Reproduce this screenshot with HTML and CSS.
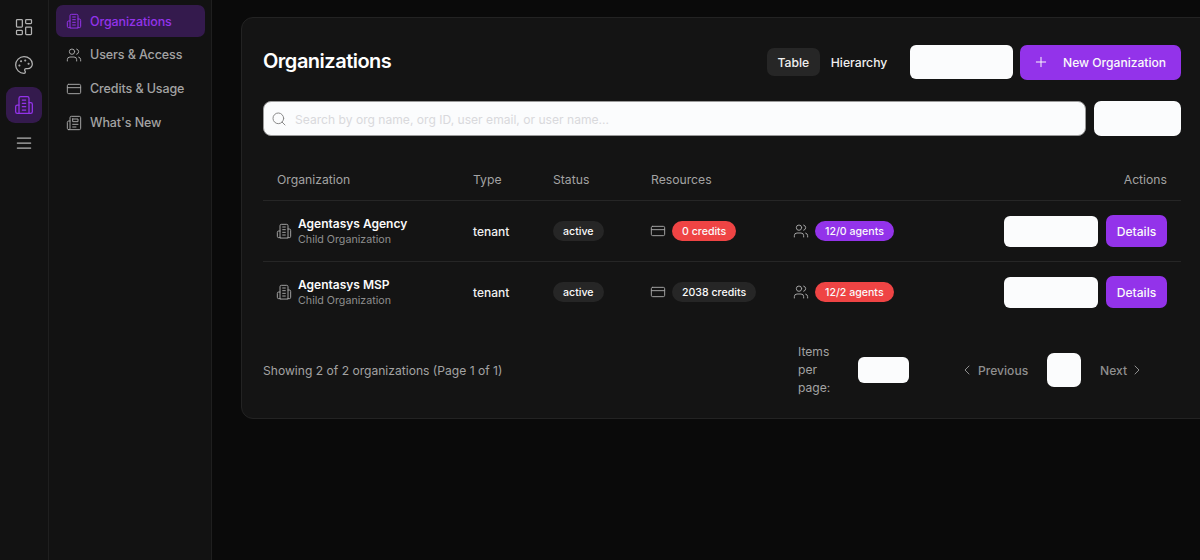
FILE: index.html
```html
<!DOCTYPE html>
<html lang="en">
<head>
<meta charset="utf-8">
<title>Organizations</title>
<link rel="stylesheet" href="styles.css">
</head>
<body>
<svg class="defs" width="0" height="0" aria-hidden="true">
  <symbol id="i-dash" viewBox="0 0 24 24"><rect x="3" y="3" width="7" height="9" rx="1"/><rect x="14" y="3" width="7" height="5" rx="1"/><rect x="14" y="12" width="7" height="9" rx="1"/><rect x="3" y="16" width="7" height="5" rx="1"/></symbol>
  <symbol id="i-palette" viewBox="0 0 24 24"><circle cx="13.5" cy="6.5" r=".5" fill="currentColor"/><circle cx="17.5" cy="10.5" r=".5" fill="currentColor"/><circle cx="8.5" cy="7.5" r=".5" fill="currentColor"/><circle cx="6.5" cy="12.5" r=".5" fill="currentColor"/><path d="M12 2C6.5 2 2 6.5 2 12s4.5 10 10 10c.926 0 1.648-.746 1.648-1.688 0-.437-.18-.835-.437-1.125-.29-.289-.438-.652-.438-1.125a1.64 1.64 0 0 1 1.668-1.668h1.996c3.051 0 5.555-2.503 5.555-5.554C21.965 6.012 17.461 2 12 2z"/></symbol>
  <symbol id="i-org" viewBox="0 0 24 24"><path d="M6 22V4a2 2 0 0 1 2-2h8a2 2 0 0 1 2 2v18Z"/><path d="M6 12H4a2 2 0 0 0-2 2v6a2 2 0 0 0 2 2h2"/><path d="M18 9h2a2 2 0 0 1 2 2v9a2 2 0 0 1-2 2h-2"/><path d="M10 6h4"/><path d="M10 10h4"/><path d="M10 14h4"/><path d="M10 18h4"/></symbol>
  <symbol id="i-menu" viewBox="0 0 24 24"><path d="M4 6h16"/><path d="M4 12h16"/><path d="M4 18h16"/></symbol>
  <symbol id="i-users" viewBox="0 0 24 24"><path d="M16 21v-2a4 4 0 0 0-4-4H6a4 4 0 0 0-4 4v2"/><circle cx="9" cy="7" r="4"/><path d="M22 21v-2a4 4 0 0 0-3-3.87"/><path d="M16 3.13a4 4 0 0 1 0 7.75"/></symbol>
  <symbol id="i-card" viewBox="0 0 24 24"><rect x="2" y="5" width="20" height="14" rx="2"/><path d="M2 10h20"/></symbol>
  <symbol id="i-news" viewBox="0 0 24 24"><path d="M4 22h16a2 2 0 0 0 2-2V4a2 2 0 0 0-2-2H8a2 2 0 0 0-2 2v16a2 2 0 0 1-2 2Zm0 0a2 2 0 0 1-2-2v-9c0-1.1.9-2 2-2h2"/><path d="M18 14h-8"/><path d="M15 18h-5"/><path d="M10 6h8v4h-8V6Z"/></symbol>
  <symbol id="i-search" viewBox="0 0 24 24"><circle cx="11" cy="11" r="8"/><path d="m21 21-4.3-4.3"/></symbol>
  <symbol id="i-plus" viewBox="0 0 24 24"><path d="M5 12h14"/><path d="M12 5v14"/></symbol>
  <symbol id="i-left" viewBox="0 0 24 24"><path d="m15 18-6-6 6-6"/></symbol>
  <symbol id="i-right" viewBox="0 0 24 24"><path d="m9 18 6-6-6-6"/></symbol>
</svg>

<nav class="rail">
  <a class="rail-btn"><svg class="icon i20"><use href="#i-dash"/></svg></a>
  <a class="rail-btn"><svg class="icon i20"><use href="#i-palette"/></svg></a>
  <a class="rail-btn is-active"><svg class="icon i20"><use href="#i-org"/></svg></a>
  <a class="rail-btn"><svg class="icon i20"><use href="#i-menu"/></svg></a>
</nav>

<aside class="side">
  <a class="side-item is-active"><svg class="icon i16"><use href="#i-org"/></svg>Organizations</a>
  <a class="side-item"><svg class="icon i16"><use href="#i-users"/></svg>Users &amp; Access</a>
  <a class="side-item"><svg class="icon i16"><use href="#i-card"/></svg>Credits &amp; Usage</a>
  <a class="side-item"><svg class="icon i16"><use href="#i-news"/></svg>What's New</a>
</aside>

<main class="main">
  <section class="card">
    <header class="head">
      <h1 class="title">Organizations</h1>
      <div class="head-actions">
        <div class="toggle">
          <span class="toggle-opt is-on">Table</span>
          <span class="toggle-opt">Hierarchy</span>
        </div>
        <div class="blank blank-head"></div>
        <button class="btn btn-new"><svg class="icon i16"><use href="#i-plus"/></svg><span>New Organization</span></button>
      </div>
    </header>

    <div class="search-row">
      <label class="search">
        <svg class="icon i16"><use href="#i-search"/></svg>
        <span class="placeholder">Search by org name, org ID, user email, or user name...</span>
      </label>
      <div class="blank blank-filter"></div>
    </div>

    <div class="table">
      <div class="row row-head">
        <div>Organization</div>
        <div>Type</div>
        <div>Status</div>
        <div>Resources</div>
        <div class="right">Actions</div>
      </div>

      <div class="row">
        <div class="org">
          <svg class="icon i16 muted"><use href="#i-org"/></svg>
          <div class="org-text"><div class="org-name">Agentasys Agency</div><div class="org-sub">Child Organization</div></div>
        </div>
        <div class="type">tenant</div>
        <div><span class="badge grey">active</span></div>
        <div class="res">
          <div class="res-item"><svg class="icon i16 muted"><use href="#i-card"/></svg><span class="badge red">0 credits</span></div>
          <div class="res-item"><svg class="icon i16 muted"><use href="#i-users"/></svg><span class="badge purple">12/0 agents</span></div>
        </div>
        <div class="acts"><div class="blank blank-act"></div><button class="btn btn-det">Details</button></div>
      </div>

      <div class="row">
        <div class="org">
          <svg class="icon i16 muted"><use href="#i-org"/></svg>
          <div class="org-text"><div class="org-name">Agentasys MSP</div><div class="org-sub">Child Organization</div></div>
        </div>
        <div class="type">tenant</div>
        <div><span class="badge grey">active</span></div>
        <div class="res">
          <div class="res-item"><svg class="icon i16 muted"><use href="#i-card"/></svg><span class="badge grey">2038 credits</span></div>
          <div class="res-item"><svg class="icon i16 muted"><use href="#i-users"/></svg><span class="badge red">12/2 agents</span></div>
        </div>
        <div class="acts"><div class="blank blank-act"></div><button class="btn btn-det">Details</button></div>
      </div>
    </div>

    <footer class="foot">
      <div class="foot-info">Showing 2 of 2 organizations (Page 1 of 1)</div>
      <div class="per-page"><span class="per-label">Items per page:</span><div class="blank blank-per"></div></div>
      <div class="pager">
        <span class="page-link"><svg class="icon i16"><use href="#i-left"/></svg>Previous</span>
        <div class="blank blank-page"></div>
        <span class="page-link"><span>Next</span><svg class="icon i16"><use href="#i-right"/></svg></span>
      </div>
    </footer>
  </section>
</main>
</body>
</html>
```

FILE: styles.css
```css
* { box-sizing: border-box; }
html, body { margin: 0; height: 560px; }
body {
  display: flex;
  width: 1200px;
  overflow: hidden;
  background: #0a0a0a;
  color: #fafafa;
  font-family: Inter, "Liberation Sans", sans-serif;
  font-size: 12px;
}
.defs { position: absolute; }
.icon { fill: none; stroke: currentColor; stroke-width: 1.5; stroke-linecap: round; stroke-linejoin: round; flex: none; display: block; }
.i20 { width: 20px; height: 20px; }
.i16 { width: 16px; height: 16px; }
.muted { color: #a1a1a1; }

.rail {
  width: 49px;
  flex: none;
  background: #121212;
  border-right: 1px solid #1f1f1f;
  display: flex;
  flex-direction: column;
  align-items: center;
  gap: 2px;
  padding-top: 9px;
}
.rail-btn { width: 36px; height: 36px; border-radius: 9px; display: flex; align-items: center; justify-content: center; color: #b3b3b3; }
.rail-btn.is-active { background: #341a4d; color: #9333ea; margin-top: 2px; }

.side {
  width: 163px;
  flex: none;
  background: #121212;
  border-right: 1px solid #1f1f1f;
  padding: 5px 6px 0 7px;
  display: flex;
  flex-direction: column;
  gap: 1.9px;
}
.side-item {
  height: 32px;
  display: flex;
  align-items: center;
  gap: 8px;
  padding-left: 10px;
  border-radius: 7px;
  color: #a3a3a3;
  font-size: 12.5px;
  font-weight: 500;
  letter-spacing: -0.1px;
}
.side-item.is-active { background: #341a4d; color: #9333ea; }

.main { flex: 1; min-width: 0; padding: 17px 0 0 29px; }
.card {
  width: 980px;
  height: 402px;
  background: #141414;
  border: 1px solid #232323;
  border-radius: 12px;
  padding: 26px 0 0 21px;
}
.head, .search-row, .table, .foot { width: 918px; }

.head { display: flex; align-items: center; justify-content: space-between; height: 36px; }
.title { margin: 0 0 2px; font-size: 20px; font-weight: 600; letter-spacing: -0.5px; color: #fff; }
.head-actions { display: flex; align-items: center; }
.toggle { display: flex; align-items: center; margin-right: 12px; width: 131px; }
.toggle-opt { height: 28px; display: flex; align-items: center; padding: 0 11px 0 10.5px; border-radius: 7px; font-size: 12.2px; font-weight: 500; color: #f0f0f0; }
.toggle-opt.is-on { background: #262626; }

.blank { background: #fbfcfd; border-radius: 6px; flex: none; }
.blank-head { width: 103px; height: 34px; margin-right: 7px; }
.btn { border: 0; color: #fafafa; font-family: inherit; font-weight: 500; font-size: 12.1px; background: #9333ea; border-radius: 7px; }
.btn-new { width: 161px; height: 35px; display: flex; align-items: center; gap: 14px; padding: 0 0 0 13px; white-space: nowrap; }

.search-row { display: flex; gap: 8px; margin-top: 21px; }
.search {
  flex: 1;
  height: 35px;
  background: #fbfcfd;
  border: 1px solid #9a9a9a;
  border-radius: 8px;
  display: flex;
  align-items: center;
  gap: 8px;
  padding-left: 7px;
  color: #8a8a8a;
}
.placeholder { color: #d9d9dc; font-size: 12.1px; padding-top: 1px; }
.blank-filter { width: 87px; height: 35px; border-radius: 7px; }

.table { margin-top: 22px; }
.row {
  display: grid;
  grid-template-columns: 196px 80px 98px 353px 1fr;
  align-items: center;
  height: 61px;
  border-top: 1px solid #262626;
  padding: 0 14px;
}
.row-head { height: 42px; border-top: 0; color: #a3a3a3; font-weight: 400; font-size: 12.2px; }
.right { text-align: right; }

.org { display: flex; align-items: center; gap: 6px; margin-left: -1px; }
.org-name { font-size: 12px; font-weight: 600; color: #fafafa; line-height: 15px; }
.org-sub { font-size: 10.7px; color: #8f8f8f; line-height: 15px; margin-top: 1px; }
.type { font-size: 12px; font-weight: 500; color: #f0f0f0; }

.badge { display: inline-flex; align-items: center; height: 20px; padding: 0 10px; border-radius: 10px; font-size: 10.6px; font-weight: 500; white-space: nowrap; color: #fafafa; }
.grey { background: #262626; }
.red { background: #ef4444; }
.purple { background: #9333ea; }

.res { display: grid; grid-template-columns: 143px 1fr; margin-left: -1px; }
.res-item { display: flex; align-items: center; gap: 6px; }

.acts { display: flex; justify-content: flex-end; align-items: center; gap: 8px; }
.blank-act { width: 94px; height: 31px; }
.btn-det { width: 61px; height: 32px; padding: 0; }

.foot { display: flex; align-items: center; margin-top: 21px; height: 54px; color: #a3a3a3; font-size: 12.1px; }
.foot-info { width: 535px; }
.per-page { display: flex; align-items: center; gap: 28px; width: 161px; }
.per-label { width: 32px; line-height: 18px; }
.blank-per { width: 51px; height: 26px; }
.pager { display: flex; align-items: center; }
.page-link { display: flex; align-items: center; gap: 3px; font-weight: 500; color: #8f8f8f; }
.page-link:first-child { width: 88px; }
.blank-page { width: 34px; height: 34px; margin-right: 19px; border-radius: 7px; }
.page-link:last-child { gap: 2px; }
```
